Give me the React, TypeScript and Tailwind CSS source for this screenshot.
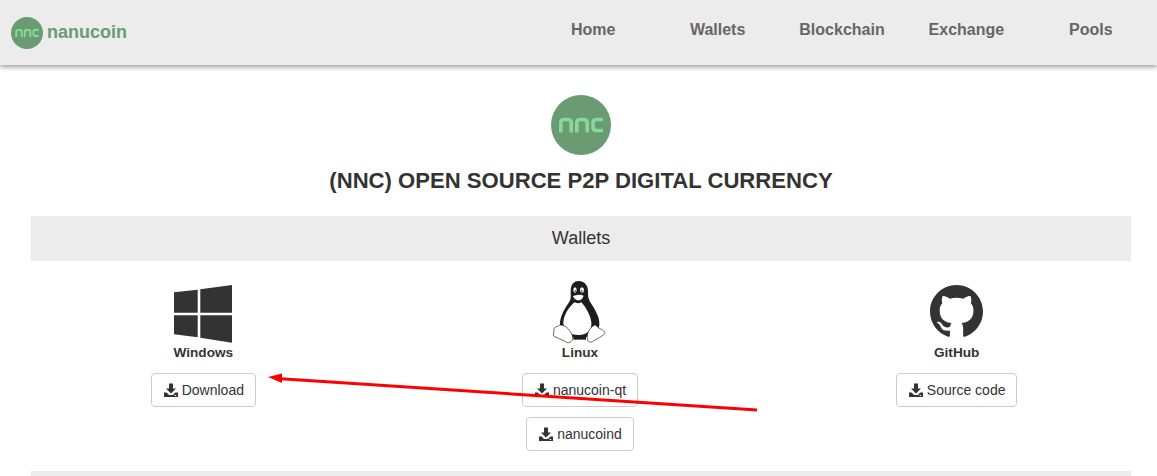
const Logo = ({ size }: { size: number }) => (
  <svg width={size} height={size} viewBox="0 0 60 60" className="block shrink-0">
    <circle cx="30" cy="30" r="30" fill="#6a9b72" />
    <g fill="none" stroke="#86d996" strokeWidth="3.6">
      <path d="M9.8 37.5V28q0-3.5 3.5-3.5h3.4q3.5 0 3.5 3.5v9.5" />
      <path d="M25.8 37.5V28q0-3.5 3.5-3.5h3.4q3.5 0 3.5 3.5v9.5" />
      <path d="M52 24.5h-6.5q-3.5 0-3.5 3.5v4q0 3.5 3.5 3.5H52" />
    </g>
  </svg>
);

const Save = () => (
  <svg width="14" height="14" viewBox="0 0 14 14" className="block shrink-0" fill="#333">
    <path d="M5 0.5h4v5h3L7 10.5 2 5.5h3z" />
    <path d="M0 9.5h2.6L5 12h4l2.4-2.5H14V14H0z" />
    <rect x="10.6" y="12" width="1.6" height="1" fill="#fff" />
  </svg>
);

const Windows = () => (
  <svg width="58" height="58" viewBox="0 0 58 58" className="mt-[5px] block" fill="#333">
    <path d="M0 7.3 23.7 4.7V27.7H0z" />
    <path d="M26.3 4.3 58 0V27.7H26.3z" />
    <path d="M0 30.3H23.7V52.3L0 49.3z" />
    <path d="M26.3 30.3H58V57.7L26.3 52.7z" />
  </svg>
);

const Tux = () => (
  <svg width="55" height="65" viewBox="130 15 165 195" className="block">
    <path
      d="M210 18c-14 0-24 10-24 30 0 14 2 22-4 32-10 16-30 42-28 72 2 20 22 36 58 36s58-14 60-38c2-24-14-48-28-70-6-10-6-18-6-32 0-18-12-30-28-30z"
      fill="#1d1d1d"
    />
    <path d="M198 82c-12 8-34 36-34 62 0 22 18 36 46 36s40-16 38-38c-2-22-20-50-30-60-6 4-14 4-20 0z" fill="#fff" />
    <path d="M252 104c8 14 16 30 16 44 0 8-6 12-14 10-2-18-4-36-2-54z" fill="#1d1d1d" />
    <ellipse cx="199" cy="45" rx="5" ry="8" fill="#fff" />
    <ellipse cx="220" cy="45" rx="6" ry="8" fill="#fff" />
    <circle cx="200" cy="48" r="2.5" fill="#1d1d1d" />
    <circle cx="219" cy="48" r="2.5" fill="#1d1d1d" />
    <path d="M192 64c6-6 26-8 34-2-3 9-10 15-17 15s-14-5-17-13z" fill="#fff" stroke="#1d1d1d" strokeWidth="2" />
    <path d="M194 182h38v12h-38z" fill="#1d1d1d" />
    <path
      d="M150 152c-6 4-14 4-14 10 0 8-2 14-2 20 8 6 28 12 40 20 8 4 20-4 18-16-2-12-14-28-26-34-6-2-12-4-16 0z"
      fill="#fff"
      stroke="#1d1d1d"
      strokeWidth="2"
    />
    <path
      d="M258 150c6 0 10 10 18 12 6 2 14 8 12 14-6 8-24 14-36 24-8 4-16 0-16-10-2-14 6-32 22-40z"
      fill="#fff"
      stroke="#1d1d1d"
      strokeWidth="2"
    />
  </svg>
);

const Github = () => (
  <svg width="53" height="53" viewBox="0 0 16 16" className="mt-[5px] block" fill="#333">
    <path d="M8 0C3.58 0 0 3.58 0 8c0 3.54 2.29 6.53 5.47 7.59.4.07.55-.17.55-.38 0-.19-.01-.82-.01-1.49-2.01.37-2.53-.49-2.69-.94-.09-.23-.48-.94-.82-1.13-.28-.15-.68-.52-.01-.53.63-.01 1.08.58 1.23.82.72 1.21 1.87.87 2.33.66.07-.52.28-.87.51-1.07-1.78-.2-3.64-.89-3.64-3.95 0-.87.31-1.59.82-2.15-.08-.2-.36-1.02.08-2.12 0 0 .67-.21 2.2.82.64-.18 1.32-.27 2-.27.68 0 1.36.09 2 .27 1.53-1.04 2.2-.82 2.2-.82.44 1.1.16 1.92.08 2.12.51.56.82 1.27.82 2.15 0 3.07-1.87 3.75-3.65 3.95.29.25.54.73.54 1.48 0 1.07-.01 1.93-.01 2.2 0 .21.15.46.55.38A8.013 8.013 0 0016 8c0-4.42-3.58-8-8-8z" />
  </svg>
);

const Btn = ({ label }: { label: string }) => (
  <a className="flex h-[34px] items-center gap-[4px] rounded-[4px] border border-[#cccccc] bg-white pl-[12px] pr-[11px] text-[14px] text-[#333]">
    <Save />
    {label}
  </a>
);

const Column = ({ icon, name, buttons }: { icon: React.ReactNode; name: string; buttons: string[] }) => (
  <div className="flex flex-col items-center">
    <div className="flex h-[63px] justify-center">{icon}</div>
    <div className="text-[13.6px] font-bold leading-[20px] text-[#333]">{name}</div>
    <div className="mt-[10px] flex flex-col items-center gap-[10px]">
      {buttons.map((b) => (
        <Btn key={b} label={b} />
      ))}
    </div>
  </div>
);

export default function App() {
  return (
    <div className="relative h-[476px] overflow-hidden bg-white font-['Liberation_Sans',Arial,sans-serif] text-[#333]">
      <nav className="relative flex h-[65px] items-center justify-between bg-[#ececec] pl-[11px] pr-[4px] shadow-[0_2px_5px_rgba(0,0,0,0.4)]">
        <div className="flex items-center gap-[4px]">
          <Logo size={32} />
          <span className="text-[18px] font-bold text-[#6a9b72]">nanucoin</span>
        </div>
        <div className="mb-[6px] grid w-[622px] grid-cols-5 text-center text-[16px] font-bold text-[#666]">
          <a>Home</a>
          <a>Wallets</a>
          <a>Blockchain</a>
          <a>Exchange</a>
          <a>Pools</a>
        </div>
      </nav>
      <main className="ml-[31px] w-[1100px]">
        <div className="mt-[30px] flex justify-center">
          <Logo size={60} />
        </div>
        <h1 className="mt-[11px] text-center text-[22.1px] font-bold leading-[30px] text-[#333]">
          (NNC) OPEN SOURCE P2P DIGITAL CURRENCY
        </h1>
        <div className="mt-[20px] flex h-[45px] items-center justify-center bg-[#ececec] text-[18px] text-[#333]">
          Wallets
        </div>
        <div className="-ml-[16px] mt-[19px] grid w-[1130px] grid-cols-3">
          <Column icon={<Windows />} name="Windows" buttons={["Download"]} />
          <Column icon={<Tux />} name="Linux" buttons={["nanucoin-qt", "nanucoind"]} />
          <Column icon={<Github />} name="GitHub" buttons={["Source code"]} />
        </div>
        <div className="mt-[20px] h-[45px] bg-[#ececec]" />
      </main>
      <svg className="pointer-events-none absolute left-0 top-0" width="1157" height="476">
        <path d="M757 410 281 378.8" stroke="#ff0000" strokeWidth="3" fill="none" />
        <path d="M268 377 282 373.5 282 383z" fill="#ff0000" />
      </svg>
    </div>
  );
}
